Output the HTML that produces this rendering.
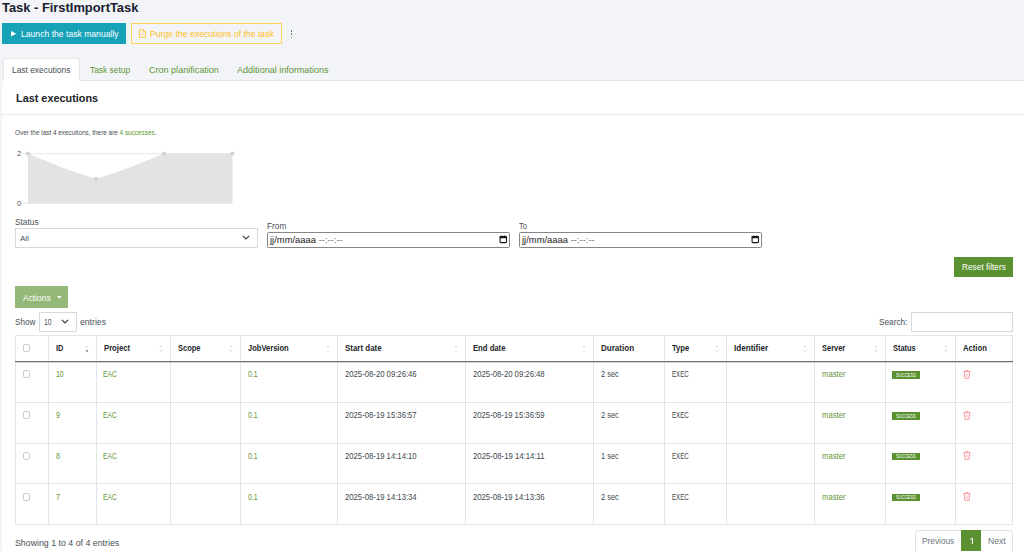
<!DOCTYPE html>
<html><head><meta charset="utf-8"><style>
html,body{margin:0;padding:0;}
body{width:1024px;height:551px;overflow:hidden;position:relative;background:#f2f4f7;font-family:"Liberation Sans", sans-serif;}
.t{position:absolute;white-space:nowrap;line-height:1;}
</style></head><body>
<div style="position:absolute;left:2px;top:81px;width:1022px;height:470px;background:#fff"></div>
<div style="position:absolute;left:80px;top:80px;width:944px;height:1px;background:#e0e5ea"></div>
<div class="t" id="t0" style="left:2.00px;top:0.53px;font-size:13.2px;color:#1b2030;font-weight:bold;transform:scaleX(0.9776);transform-origin:0 0;">Task - FirstImportTask</div>
<div style="position:absolute;left:2px;top:23px;width:124px;height:21px;background:#17a2b8"></div>
<svg style="position:absolute;left:11px;top:30.8px" width="6" height="6" viewBox="0 0 6 6"><path d="M0 0 L5.3 2.75 L0 5.5 Z" fill="#fff"/></svg>
<div class="t" id="t1" style="left:21.00px;top:30.01px;font-size:9.2px;color:#fff;font-weight:normal;transform:scaleX(0.9369);transform-origin:0 0;">Launch the task manually</div>
<div style="position:absolute;left:131px;top:23px;width:151px;height:21px;border:1px solid #ffd25c;box-sizing:border-box"></div>
<svg style="position:absolute;left:138px;top:28px" width="10" height="11" viewBox="0 0 10 11"><path d="M1.5 1.7 H5.6 L7.6 3.7 V9.4 H1.5 Z" fill="none" stroke="#ffc83f" stroke-width="0.95" stroke-linejoin="miter"/><path d="M5.4 1.7 V3.9 H7.6" fill="none" stroke="#ffc83f" stroke-width="0.8"/><circle cx="4.5" cy="6.2" r="0.9" fill="#ffc83f"/></svg>
<div class="t" id="t2" style="left:149.80px;top:30.01px;font-size:9.2px;color:#ffc125;font-weight:normal;transform:scaleX(0.9433);transform-origin:0 0;">Purge the executions of the task</div>
<div style="position:absolute;left:290.5px;top:29.95px;width:1.7px;height:1.7px;border-radius:50%;background:#4a7a33"></div>
<div style="position:absolute;left:290.5px;top:33.35px;width:1.7px;height:1.7px;border-radius:50%;background:#4a7a33"></div>
<div style="position:absolute;left:290.5px;top:36.75px;width:1.7px;height:1.7px;border-radius:50%;background:#4a7a33"></div>
<div style="position:absolute;left:3px;top:57.5px;width:77px;height:23.5px;background:#fff;border:1px solid #e4e7eb;border-bottom:none;border-radius:3px 3px 0 0;box-sizing:border-box"></div>
<div class="t" id="t3" style="left:12.00px;top:64.87px;font-size:9.6px;color:#495057;font-weight:normal;transform:scaleX(0.8749);transform-origin:0 0;">Last executions</div>
<div class="t" id="t4" style="left:90.20px;top:64.67px;font-size:9.6px;color:#5f9637;font-weight:normal;transform:scaleX(0.8743);transform-origin:0 0;">Task setup</div>
<div class="t" id="t5" style="left:148.75px;top:64.67px;font-size:9.6px;color:#5f9637;font-weight:normal;transform:scaleX(0.9418);transform-origin:0 0;">Cron planification</div>
<div class="t" id="t6" style="left:237.20px;top:64.67px;font-size:9.6px;color:#5f9637;font-weight:normal;transform:scaleX(0.9428);transform-origin:0 0;">Additional informations</div>
<div class="t" id="t7" style="left:15.50px;top:92.82px;font-size:10.85px;color:#212529;font-weight:bold;transform:scaleX(1.0021);transform-origin:0 0;">Last executions</div>
<div style="position:absolute;left:2px;top:114px;width:1022px;height:1px;background:#e9ecef"></div>
<div class="t" id="t8" style="left:15.20px;top:129.07px;font-size:7.0px;color:#474d53;font-weight:normal;transform:scaleX(0.9111);transform-origin:0 0;">Over the last 4 executions, there are <span style="color:#5a9a2e">4 successes</span>.</div>
<svg style="position:absolute;left:0;top:140px" width="260" height="75" viewBox="0 140 260 75">
<line x1="23" y1="153.6" x2="232.5" y2="153.6" stroke="#e8e8e8" stroke-width="1"/>
<line x1="23" y1="203.3" x2="232.5" y2="203.3" stroke="#e8e8e8" stroke-width="1"/>
<path d="M28 153.6 C 50 163, 80 175, 96 178.5 C 112 175, 142 163, 164 153.6 L 232.5 153.6 L 232.5 203.3 L 28 203.3 Z" fill="#e3e3e3"/>
<circle cx="28" cy="153.6" r="2" fill="#d2d2d2"/>
<circle cx="96" cy="178.8" r="2" fill="#d2d2d2"/>
<circle cx="164" cy="153.6" r="2" fill="#d2d2d2"/>
<circle cx="232.5" cy="153.6" r="2" fill="#d2d2d2"/>
</svg>
<div class="t" id="t9" style="left:17.00px;top:149.74px;font-size:7.4px;color:#555;font-weight:normal;transform:scaleX(1.0500);transform-origin:0 0;">2</div>
<div class="t" id="t10" style="left:17.00px;top:199.74px;font-size:7.4px;color:#555;font-weight:normal;transform:scaleX(1.0500);transform-origin:0 0;">0</div>
<div class="t" id="t11" style="left:15.00px;top:218.01px;font-size:9.2px;color:#495057;font-weight:normal;transform:scaleX(0.9035);transform-origin:0 0;">Status</div>
<div style="position:absolute;left:15px;top:228px;width:243px;height:20px;border:1px solid #d5dae0;box-sizing:border-box;background:#fff"></div>
<div class="t" id="t12" style="left:20.00px;top:235.13px;font-size:8.0px;color:#495057;font-weight:normal;transform:scaleX(0.9985);transform-origin:0 0;">All</div>
<svg style="position:absolute;left:242px;top:235px" width="8" height="5" viewBox="0 0 8 5"><path d="M0.9 0.9 L4 4 L7.1 0.9" fill="none" stroke="#343a40" stroke-width="1.15"/></svg>
<div class="t" id="t13" style="left:267.20px;top:221.71px;font-size:9.2px;color:#495057;font-weight:normal;transform:scaleX(0.9044);transform-origin:0 0;">From</div>
<div style="position:absolute;left:266.5px;top:232px;width:243.5px;height:16px;border:1px solid #858585;border-radius:1.5px;box-sizing:border-box;background:#fff"></div>
<div class="t" id="t14" style="left:269.78px;top:235.17px;font-size:9.6px;color:#222;font-weight:normal;transform:scaleX(0.9814);transform-origin:0 0;">jj/mm/aaaa <span style="color:#6f6f6f">--:--:--</span></div>
<svg style="position:absolute;left:499px;top:235px" width="9" height="9" viewBox="0 0 9 9"><rect x="1.1" y="1.6" width="6.4" height="6.0" rx="0.9" fill="none" stroke="#1a1a1a" stroke-width="1.1"/><rect x="0.6" y="1.1" width="7.4" height="2.1" rx="0.6" fill="#1a1a1a"/><rect x="2.3" y="0.4" width="1" height="1.2" fill="#1a1a1a"/><rect x="5.3" y="0.4" width="1" height="1.2" fill="#1a1a1a"/></svg>
<div class="t" id="t15" style="left:519.40px;top:221.71px;font-size:9.2px;color:#495057;font-weight:normal;transform:scaleX(0.8131);transform-origin:0 0;">To</div>
<div style="position:absolute;left:519px;top:232px;width:243px;height:16px;border:1px solid #858585;border-radius:1.5px;box-sizing:border-box;background:#fff"></div>
<div class="t" id="t16" style="left:522.28px;top:235.17px;font-size:9.6px;color:#222;font-weight:normal;transform:scaleX(0.9814);transform-origin:0 0;">jj/mm/aaaa <span style="color:#6f6f6f">--:--:--</span></div>
<svg style="position:absolute;left:751px;top:235px" width="9" height="9" viewBox="0 0 9 9"><rect x="1.1" y="1.6" width="6.4" height="6.0" rx="0.9" fill="none" stroke="#1a1a1a" stroke-width="1.1"/><rect x="0.6" y="1.1" width="7.4" height="2.1" rx="0.6" fill="#1a1a1a"/><rect x="2.3" y="0.4" width="1" height="1.2" fill="#1a1a1a"/><rect x="5.3" y="0.4" width="1" height="1.2" fill="#1a1a1a"/></svg>
<div style="position:absolute;left:954px;top:257px;width:59px;height:20px;background:#5b9231"></div>
<div class="t" id="t17" style="left:961.70px;top:262.98px;font-size:9.0px;color:#fff;font-weight:normal;transform:scaleX(0.9227);transform-origin:0 0;">Reset filters</div>
<div style="position:absolute;left:15px;top:286px;width:53px;height:22px;background:#93b877"></div>
<div class="t" id="t18" style="left:22.90px;top:294.20px;font-size:9.1px;color:#fff;font-weight:normal;transform:scaleX(0.9282);transform-origin:0 0;">Actions</div>
<svg style="position:absolute;left:56.6px;top:296.2px" width="5" height="3" viewBox="0 0 5 3"><path d="M0 0 H4.6 L2.3 2.7 Z" fill="#fff"/></svg>
<div class="t" id="t19" style="left:15.20px;top:318.20px;font-size:9.1px;color:#495057;font-weight:normal;transform:scaleX(0.8887);transform-origin:0 0;">Show</div>
<div style="position:absolute;left:39px;top:312px;width:38px;height:20px;border:1px solid #d5dae0;box-sizing:border-box;background:#fff"></div>
<div class="t" id="t20" style="left:44.40px;top:317.90px;font-size:8.5px;color:#495057;font-weight:normal;transform:scaleX(0.8019);transform-origin:0 0;">10</div>
<svg style="position:absolute;left:61px;top:319px" width="8" height="5" viewBox="0 0 8 5"><path d="M0.9 0.9 L4 4 L7.1 0.9" fill="none" stroke="#343a40" stroke-width="1.15"/></svg>
<div class="t" id="t21" style="left:79.70px;top:318.20px;font-size:9.1px;color:#495057;font-weight:normal;transform:scaleX(0.9514);transform-origin:0 0;">entries</div>
<div class="t" id="t22" style="left:879.20px;top:317.60px;font-size:9.1px;color:#495057;font-weight:normal;transform:scaleX(0.9087);transform-origin:0 0;">Search:</div>
<div style="position:absolute;left:911px;top:312px;width:102px;height:20px;border:1px solid #d5dae0;box-sizing:border-box;background:#fff"></div>
<div style="position:absolute;left:15.5px;top:335px;width:997.0px;height:1px;background:#e1e5e9"></div>
<div style="position:absolute;left:15.0px;top:335px;width:1.0px;height:189.39999999999998px;background:#e1e5e9"></div>
<div style="position:absolute;left:47.8px;top:335px;width:1.0px;height:189.39999999999998px;background:#e1e5e9"></div>
<div style="position:absolute;left:95.9px;top:335px;width:1.0px;height:189.39999999999998px;background:#e1e5e9"></div>
<div style="position:absolute;left:169.9px;top:335px;width:1.0px;height:189.39999999999998px;background:#e1e5e9"></div>
<div style="position:absolute;left:239.9px;top:335px;width:1.0px;height:189.39999999999998px;background:#e1e5e9"></div>
<div style="position:absolute;left:336.9px;top:335px;width:1.0px;height:189.39999999999998px;background:#e1e5e9"></div>
<div style="position:absolute;left:465.0px;top:335px;width:1.0px;height:189.39999999999998px;background:#e1e5e9"></div>
<div style="position:absolute;left:592.8px;top:335px;width:1.0px;height:189.39999999999998px;background:#e1e5e9"></div>
<div style="position:absolute;left:664.1px;top:335px;width:1.0px;height:189.39999999999998px;background:#e1e5e9"></div>
<div style="position:absolute;left:725.9px;top:335px;width:1.0px;height:189.39999999999998px;background:#e1e5e9"></div>
<div style="position:absolute;left:813.8px;top:335px;width:1.0px;height:189.39999999999998px;background:#e1e5e9"></div>
<div style="position:absolute;left:885.0px;top:335px;width:1.0px;height:189.39999999999998px;background:#e1e5e9"></div>
<div style="position:absolute;left:955.1px;top:335px;width:1.0px;height:189.39999999999998px;background:#e1e5e9"></div>
<div style="position:absolute;left:1012.0px;top:335px;width:1.0px;height:189.39999999999998px;background:#e1e5e9"></div>
<div style="position:absolute;left:15.5px;top:402.0px;width:997.0px;height:1.0px;background:#e1e5e9"></div>
<div style="position:absolute;left:15.5px;top:443.0px;width:997.0px;height:1.0px;background:#e1e5e9"></div>
<div style="position:absolute;left:15.5px;top:483.0px;width:997.0px;height:1.0px;background:#e1e5e9"></div>
<div style="position:absolute;left:15.5px;top:523.9px;width:997.0px;height:1.0px;background:#e1e5e9"></div>
<div style="position:absolute;left:15.0px;top:361px;width:998.0px;height:1px;background:#6c7074"></div>
<div style="position:absolute;left:15.0px;top:362px;width:998.0px;height:1px;background:#d3d5d7"></div>
<div class="t" id="t23" style="left:55.50px;top:344.17px;font-size:8.9px;color:#212529;font-weight:bold;transform:scaleX(0.8346);transform-origin:0 0;">ID</div>
<svg style="position:absolute;left:84.60000000000001px;top:345.2px" width="4" height="8" viewBox="0 0 4 8"><path d="M0.6 2.1 L2 0.4 L3.4 2.1 Z" fill="#d6d6d6"/><path d="M0.6 5.3 L2 7.0 L3.4 5.3 Z" fill="#555"/></svg>
<div class="t" id="t24" style="left:103.60px;top:344.17px;font-size:8.9px;color:#212529;font-weight:bold;transform:scaleX(0.8662);transform-origin:0 0;">Project</div>
<svg style="position:absolute;left:158.6px;top:345.2px" width="4" height="8" viewBox="0 0 4 8"><path d="M0.6 2.1 L2 0.4 L3.4 2.1 Z" fill="#d6d6d6"/><path d="M0.6 5.3 L2 7.0 L3.4 5.3 Z" fill="#d6d6d6"/></svg>
<div class="t" id="t25" style="left:177.60px;top:344.17px;font-size:8.9px;color:#212529;font-weight:bold;transform:scaleX(0.8428);transform-origin:0 0;">Scope</div>
<svg style="position:absolute;left:228.6px;top:345.2px" width="4" height="8" viewBox="0 0 4 8"><path d="M0.6 2.1 L2 0.4 L3.4 2.1 Z" fill="#d6d6d6"/><path d="M0.6 5.3 L2 7.0 L3.4 5.3 Z" fill="#d6d6d6"/></svg>
<div class="t" id="t26" style="left:247.60px;top:344.17px;font-size:8.9px;color:#212529;font-weight:bold;transform:scaleX(0.8499);transform-origin:0 0;">JobVersion</div>
<svg style="position:absolute;left:325.59999999999997px;top:345.2px" width="4" height="8" viewBox="0 0 4 8"><path d="M0.6 2.1 L2 0.4 L3.4 2.1 Z" fill="#d6d6d6"/><path d="M0.6 5.3 L2 7.0 L3.4 5.3 Z" fill="#d6d6d6"/></svg>
<div class="t" id="t27" style="left:344.60px;top:344.17px;font-size:8.9px;color:#212529;font-weight:bold;transform:scaleX(0.8952);transform-origin:0 0;">Start date</div>
<svg style="position:absolute;left:453.7px;top:345.2px" width="4" height="8" viewBox="0 0 4 8"><path d="M0.6 2.1 L2 0.4 L3.4 2.1 Z" fill="#d6d6d6"/><path d="M0.6 5.3 L2 7.0 L3.4 5.3 Z" fill="#d6d6d6"/></svg>
<div class="t" id="t28" style="left:472.70px;top:344.17px;font-size:8.9px;color:#212529;font-weight:bold;transform:scaleX(0.8657);transform-origin:0 0;">End date</div>
<svg style="position:absolute;left:581.5px;top:345.2px" width="4" height="8" viewBox="0 0 4 8"><path d="M0.6 2.1 L2 0.4 L3.4 2.1 Z" fill="#d6d6d6"/><path d="M0.6 5.3 L2 7.0 L3.4 5.3 Z" fill="#d6d6d6"/></svg>
<div class="t" id="t29" style="left:600.50px;top:344.17px;font-size:8.9px;color:#212529;font-weight:bold;transform:scaleX(0.9068);transform-origin:0 0;">Duration</div>
<div class="t" id="t30" style="left:671.80px;top:344.17px;font-size:8.9px;color:#212529;font-weight:bold;transform:scaleX(0.8599);transform-origin:0 0;">Type</div>
<svg style="position:absolute;left:714.6px;top:345.2px" width="4" height="8" viewBox="0 0 4 8"><path d="M0.6 2.1 L2 0.4 L3.4 2.1 Z" fill="#d6d6d6"/><path d="M0.6 5.3 L2 7.0 L3.4 5.3 Z" fill="#d6d6d6"/></svg>
<div class="t" id="t31" style="left:733.60px;top:344.17px;font-size:8.9px;color:#212529;font-weight:bold;transform:scaleX(0.9126);transform-origin:0 0;">Identifier</div>
<svg style="position:absolute;left:802.5px;top:345.2px" width="4" height="8" viewBox="0 0 4 8"><path d="M0.6 2.1 L2 0.4 L3.4 2.1 Z" fill="#d6d6d6"/><path d="M0.6 5.3 L2 7.0 L3.4 5.3 Z" fill="#d6d6d6"/></svg>
<div class="t" id="t32" style="left:821.50px;top:344.17px;font-size:8.9px;color:#212529;font-weight:bold;transform:scaleX(0.8410);transform-origin:0 0;">Server</div>
<svg style="position:absolute;left:873.7px;top:345.2px" width="4" height="8" viewBox="0 0 4 8"><path d="M0.6 2.1 L2 0.4 L3.4 2.1 Z" fill="#d6d6d6"/><path d="M0.6 5.3 L2 7.0 L3.4 5.3 Z" fill="#d6d6d6"/></svg>
<div class="t" id="t33" style="left:892.70px;top:344.17px;font-size:8.9px;color:#212529;font-weight:bold;transform:scaleX(0.8386);transform-origin:0 0;">Status</div>
<svg style="position:absolute;left:943.8000000000001px;top:345.2px" width="4" height="8" viewBox="0 0 4 8"><path d="M0.6 2.1 L2 0.4 L3.4 2.1 Z" fill="#d6d6d6"/><path d="M0.6 5.3 L2 7.0 L3.4 5.3 Z" fill="#d6d6d6"/></svg>
<div class="t" id="t34" style="left:962.80px;top:344.17px;font-size:8.9px;color:#212529;font-weight:bold;transform:scaleX(0.8644);transform-origin:0 0;">Action</div>
<div style="position:absolute;left:22.7px;top:344.3px;width:7.800000000000001px;height:8.199999999999989px;border:1px solid #c9cdd1;border-radius:2px;box-sizing:border-box;background:#fff"></div>
<div style="position:absolute;left:22.7px;top:370.1px;width:7.800000000000001px;height:8.199999999999989px;border:1px solid #c9cdd1;border-radius:2px;box-sizing:border-box;background:#fff"></div>
<div class="t" id="t35" style="left:55.60px;top:370.23px;font-size:9.3px;color:#5f9637;font-weight:normal;transform:scaleX(0.7374);transform-origin:0 0;">10</div>
<div class="t" id="t36" style="left:103.30px;top:370.23px;font-size:9.3px;color:#5f9637;font-weight:normal;transform:scaleX(0.7216);transform-origin:0 0;">EAC</div>
<div class="t" id="t37" style="left:247.60px;top:370.23px;font-size:9.3px;color:#5f9637;font-weight:normal;transform:scaleX(0.7449);transform-origin:0 0;">0.1</div>
<div class="t" id="t38" style="left:344.70px;top:370.23px;font-size:9.3px;color:#41474d;font-weight:normal;transform:scaleX(0.8299);transform-origin:0 0;">2025-08-20 09:26:46</div>
<div class="t" id="t39" style="left:472.80px;top:370.23px;font-size:9.3px;color:#41474d;font-weight:normal;transform:scaleX(0.8299);transform-origin:0 0;">2025-08-20 09:26:48</div>
<div class="t" id="t40" style="left:600.90px;top:370.23px;font-size:9.3px;color:#41474d;font-weight:normal;transform:scaleX(0.8019);transform-origin:0 0;">2 sec</div>
<div class="t" id="t41" style="left:671.80px;top:370.23px;font-size:9.3px;color:#41474d;font-weight:normal;transform:scaleX(0.6640);transform-origin:0 0;">EXEC</div>
<div class="t" id="t42" style="left:821.60px;top:370.23px;font-size:9.3px;color:#5f9637;font-weight:normal;transform:scaleX(0.8264);transform-origin:0 0;">master</div>
<div style="position:absolute;left:892.4px;top:371.3px;width:27.600000000000023px;height:7.600000000000023px;background:#5b9231"></div>
<div class="t" id="t43" style="left:896.30px;top:373.85px;font-size:4.9px;color:#fff;font-weight:normal;transform:scaleX(0.8367);transform-origin:0 0;">SUCCESS</div>
<svg style="position:absolute;left:962.8px;top:369.8px" width="8" height="9" viewBox="0 0 8 9"><path d="M0.5 1.6 H7.5 M2.8 1.6 V0.6 H5.2 V1.6 M1.3 1.8 L1.9 8.4 H6.1 L6.7 1.8" fill="none" stroke="#f89ca4" stroke-width="1"/><path d="M3.2 3.3 V7 M4.8 3.3 V7" stroke="#f9b0b6" stroke-width="0.7"/></svg>
<div style="position:absolute;left:22.7px;top:410.90000000000003px;width:7.800000000000001px;height:8.199999999999989px;border:1px solid #c9cdd1;border-radius:2px;box-sizing:border-box;background:#fff"></div>
<div class="t" id="t44" style="left:55.60px;top:411.03px;font-size:9.3px;color:#5f9637;font-weight:normal;transform:scaleX(0.7800);transform-origin:0 0;">9</div>
<div class="t" id="t45" style="left:103.30px;top:411.03px;font-size:9.3px;color:#5f9637;font-weight:normal;transform:scaleX(0.7216);transform-origin:0 0;">EAC</div>
<div class="t" id="t46" style="left:247.60px;top:411.03px;font-size:9.3px;color:#5f9637;font-weight:normal;transform:scaleX(0.7449);transform-origin:0 0;">0.1</div>
<div class="t" id="t47" style="left:344.70px;top:411.03px;font-size:9.3px;color:#41474d;font-weight:normal;transform:scaleX(0.8299);transform-origin:0 0;">2025-08-19 15:36:57</div>
<div class="t" id="t48" style="left:472.80px;top:411.03px;font-size:9.3px;color:#41474d;font-weight:normal;transform:scaleX(0.8299);transform-origin:0 0;">2025-08-19 15:36:59</div>
<div class="t" id="t49" style="left:600.90px;top:411.03px;font-size:9.3px;color:#41474d;font-weight:normal;transform:scaleX(0.8019);transform-origin:0 0;">2 sec</div>
<div class="t" id="t50" style="left:671.80px;top:411.03px;font-size:9.3px;color:#41474d;font-weight:normal;transform:scaleX(0.6640);transform-origin:0 0;">EXEC</div>
<div class="t" id="t51" style="left:821.60px;top:411.03px;font-size:9.3px;color:#5f9637;font-weight:normal;transform:scaleX(0.8264);transform-origin:0 0;">master</div>
<div style="position:absolute;left:892.4px;top:412.1px;width:27.600000000000023px;height:7.600000000000023px;background:#5b9231"></div>
<div class="t" id="t52" style="left:896.30px;top:414.65px;font-size:4.9px;color:#fff;font-weight:normal;transform:scaleX(0.8367);transform-origin:0 0;">SUCCESS</div>
<svg style="position:absolute;left:962.8px;top:410.6px" width="8" height="9" viewBox="0 0 8 9"><path d="M0.5 1.6 H7.5 M2.8 1.6 V0.6 H5.2 V1.6 M1.3 1.8 L1.9 8.4 H6.1 L6.7 1.8" fill="none" stroke="#f89ca4" stroke-width="1"/><path d="M3.2 3.3 V7 M4.8 3.3 V7" stroke="#f9b0b6" stroke-width="0.7"/></svg>
<div style="position:absolute;left:22.7px;top:451.70000000000005px;width:7.800000000000001px;height:8.199999999999989px;border:1px solid #c9cdd1;border-radius:2px;box-sizing:border-box;background:#fff"></div>
<div class="t" id="t53" style="left:55.60px;top:451.83px;font-size:9.3px;color:#5f9637;font-weight:normal;transform:scaleX(0.7800);transform-origin:0 0;">8</div>
<div class="t" id="t54" style="left:103.30px;top:451.83px;font-size:9.3px;color:#5f9637;font-weight:normal;transform:scaleX(0.7216);transform-origin:0 0;">EAC</div>
<div class="t" id="t55" style="left:247.60px;top:451.83px;font-size:9.3px;color:#5f9637;font-weight:normal;transform:scaleX(0.7449);transform-origin:0 0;">0.1</div>
<div class="t" id="t56" style="left:344.70px;top:451.83px;font-size:9.3px;color:#41474d;font-weight:normal;transform:scaleX(0.8299);transform-origin:0 0;">2025-08-19 14:14:10</div>
<div class="t" id="t57" style="left:472.80px;top:451.83px;font-size:9.3px;color:#41474d;font-weight:normal;transform:scaleX(0.8366);transform-origin:0 0;">2025-08-19 14:14:11</div>
<div class="t" id="t58" style="left:600.90px;top:451.83px;font-size:9.3px;color:#41474d;font-weight:normal;transform:scaleX(0.8019);transform-origin:0 0;">1 sec</div>
<div class="t" id="t59" style="left:671.80px;top:451.83px;font-size:9.3px;color:#41474d;font-weight:normal;transform:scaleX(0.6640);transform-origin:0 0;">EXEC</div>
<div class="t" id="t60" style="left:821.60px;top:451.83px;font-size:9.3px;color:#5f9637;font-weight:normal;transform:scaleX(0.8264);transform-origin:0 0;">master</div>
<div style="position:absolute;left:892.4px;top:452.90000000000003px;width:27.600000000000023px;height:7.600000000000023px;background:#5b9231"></div>
<div class="t" id="t61" style="left:896.30px;top:455.45px;font-size:4.9px;color:#fff;font-weight:normal;transform:scaleX(0.8367);transform-origin:0 0;">SUCCESS</div>
<svg style="position:absolute;left:962.8px;top:451.40000000000003px" width="8" height="9" viewBox="0 0 8 9"><path d="M0.5 1.6 H7.5 M2.8 1.6 V0.6 H5.2 V1.6 M1.3 1.8 L1.9 8.4 H6.1 L6.7 1.8" fill="none" stroke="#f89ca4" stroke-width="1"/><path d="M3.2 3.3 V7 M4.8 3.3 V7" stroke="#f9b0b6" stroke-width="0.7"/></svg>
<div style="position:absolute;left:22.7px;top:492.5px;width:7.800000000000001px;height:8.199999999999989px;border:1px solid #c9cdd1;border-radius:2px;box-sizing:border-box;background:#fff"></div>
<div class="t" id="t62" style="left:55.60px;top:492.63px;font-size:9.3px;color:#5f9637;font-weight:normal;transform:scaleX(0.7800);transform-origin:0 0;">7</div>
<div class="t" id="t63" style="left:103.30px;top:492.63px;font-size:9.3px;color:#5f9637;font-weight:normal;transform:scaleX(0.7216);transform-origin:0 0;">EAC</div>
<div class="t" id="t64" style="left:247.60px;top:492.63px;font-size:9.3px;color:#5f9637;font-weight:normal;transform:scaleX(0.7449);transform-origin:0 0;">0.1</div>
<div class="t" id="t65" style="left:344.70px;top:492.63px;font-size:9.3px;color:#41474d;font-weight:normal;transform:scaleX(0.8299);transform-origin:0 0;">2025-08-19 14:13:34</div>
<div class="t" id="t66" style="left:472.80px;top:492.63px;font-size:9.3px;color:#41474d;font-weight:normal;transform:scaleX(0.8299);transform-origin:0 0;">2025-08-19 14:13:36</div>
<div class="t" id="t67" style="left:600.90px;top:492.63px;font-size:9.3px;color:#41474d;font-weight:normal;transform:scaleX(0.8019);transform-origin:0 0;">2 sec</div>
<div class="t" id="t68" style="left:671.80px;top:492.63px;font-size:9.3px;color:#41474d;font-weight:normal;transform:scaleX(0.6640);transform-origin:0 0;">EXEC</div>
<div class="t" id="t69" style="left:821.60px;top:492.63px;font-size:9.3px;color:#5f9637;font-weight:normal;transform:scaleX(0.8264);transform-origin:0 0;">master</div>
<div style="position:absolute;left:892.4px;top:493.7px;width:27.600000000000023px;height:7.600000000000023px;background:#5b9231"></div>
<div class="t" id="t70" style="left:896.30px;top:496.25px;font-size:4.9px;color:#fff;font-weight:normal;transform:scaleX(0.8367);transform-origin:0 0;">SUCCESS</div>
<svg style="position:absolute;left:962.8px;top:492.2px" width="8" height="9" viewBox="0 0 8 9"><path d="M0.5 1.6 H7.5 M2.8 1.6 V0.6 H5.2 V1.6 M1.3 1.8 L1.9 8.4 H6.1 L6.7 1.8" fill="none" stroke="#f89ca4" stroke-width="1"/><path d="M3.2 3.3 V7 M4.8 3.3 V7" stroke="#f9b0b6" stroke-width="0.7"/></svg>
<div class="t" id="t71" style="left:15.40px;top:539.33px;font-size:9.3px;color:#495057;font-weight:normal;transform:scaleX(0.9463);transform-origin:0 0;">Showing 1 to 4 of 4 entries</div>
<div style="position:absolute;left:915px;top:530px;width:98px;height:30px;border:1px solid #dee2e6;border-radius:3px;box-sizing:border-box;background:#fff"></div>
<div style="position:absolute;left:961px;top:530px;width:20px;height:30px;background:#5b9231"></div>
<div class="t" id="t72" style="left:922.40px;top:537.18px;font-size:9.0px;color:#6c757d;font-weight:normal;transform:scaleX(0.9207);transform-origin:0 0;">Previous</div>
<svg style="position:absolute;left:968px;top:536px" width="7" height="9" viewBox="0 0 7 9"><path d="M4.4 2.0 V7.9" stroke="#fff" stroke-width="1.1" fill="none"/><path d="M2.2 3.5 L4.4 2.1" stroke="#fff" stroke-width="0.9" fill="none"/></svg>
<div class="t" id="t73" style="left:987.80px;top:537.18px;font-size:9.0px;color:#6c757d;font-weight:normal;transform:scaleX(0.9524);transform-origin:0 0;">Next</div>
</body></html>
